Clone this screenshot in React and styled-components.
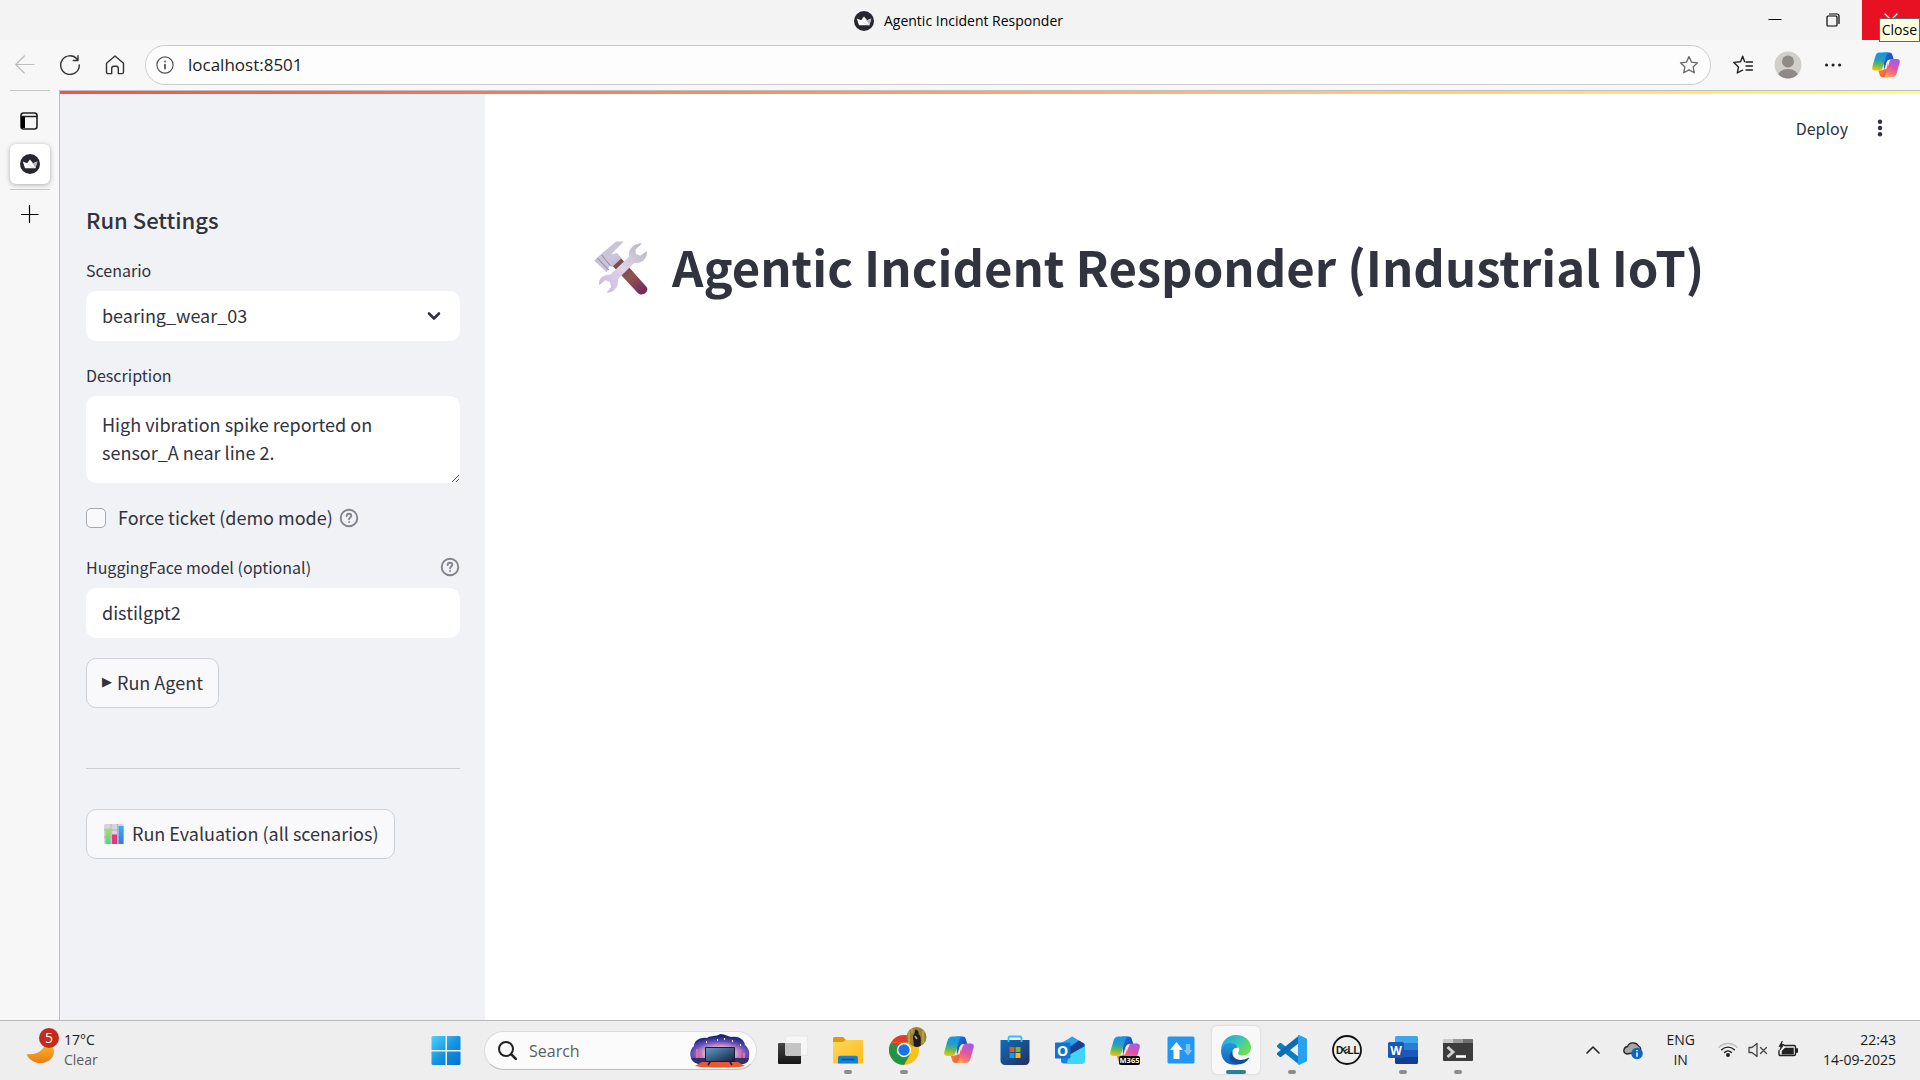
import React from "react";
import styled, { createGlobalStyle } from "styled-components";

const ui = `"Open Sans", "Noto Sans", sans-serif`;
const page = `"Noto Sans CJK SC", "Noto Sans CJK JP", sans-serif`;
const ink = "#31333f";

const Global = createGlobalStyle`
  *, *::before, *::after { box-sizing: border-box; }
  body { margin: 0; background: #fff; }
  button, input, select, textarea { font: inherit; color: inherit; margin: 0; }
  svg { display: block; flex: none; }
`;

const Desktop = styled.div`
  min-height: 100vh;
  display: flex;
  flex-direction: column;
  font-family: ${ui};
  color: #1b1b1b;
`;

/* ---------- window chrome ---------- */

const TitleBar = styled.header`
  height: 40px;
  background: #f3f3f3;
  display: grid;
  grid-template-columns: 1fr auto 1fr;
  align-items: center;
`;
const WindowTitle = styled.div`
  grid-column: 2;
  display: flex;
  align-items: center;
  gap: 10px;
  padding: 1px 3px 0 0;
  font-size: 14px;
  line-height: 20px;
  color: #000;
`;
const WindowButtons = styled.div`
  display: flex;
  justify-content: flex-end;
  align-self: stretch;
  position: relative;
`;
const WindowButton = styled.button`
  width: 58px;
  border: 0;
  padding: 0;
  display: flex;
  align-items: center;
  justify-content: center;
  background: ${(p) => (p.$danger ? "#e81123" : "transparent")};
`;
const Tooltip = styled.div`
  position: absolute;
  right: 0;
  top: 18px;
  padding: 0 2px;
  border: 1px solid #666;
  background: #ffffe1;
  font-size: 14px;
  line-height: 22px;
  color: #000;
  z-index: 2;
`;
const Toolbar = styled.nav`
  height: 50px;
  background: #f7f7f7;
  display: flex;
  align-items: center;
  padding: 0 12px 0 2px;
`;
const ToolButton = styled.button`
  width: 45px;
  height: 40px;
  padding: 0;
  border: 0;
  background: none;
  display: flex;
  align-items: center;
  justify-content: center;
`;
const AssistantButton = styled(ToolButton)`
  margin-left: 8px;
`;
const AddressBar = styled.div`
  flex: 1;
  height: 40px;
  margin: 0 9px 0 8px;
  padding: 0 11px 0 10px;
  border: 1px solid #cdcdcd;
  border-radius: 20px;
  background: #fdfdfd;
  display: flex;
  align-items: center;
  gap: 14px;
`;
const Address = styled.input`
  flex: 1;
  min-width: 0;
  border: 0;
  padding: 0;
  background: none;
  outline: 0;
  font-size: 17px;
  line-height: 24px;
  color: #222;
`;
const PlainButton = styled.button`
  border: 0;
  padding: 0;
  background: none;
`;

const Body = styled.div`
  flex: 1;
  display: flex;
  background: #f7f7f7;
`;
const TabStrip = styled.nav`
  width: 59px;
  padding: 0 9px 0 10px;
  display: flex;
  flex-direction: column;
  align-items: center;
`;
const StripLine = styled.div`
  align-self: stretch;
  height: 1px;
  background: #c8c8c8;
`;
const StripButton = styled.button`
  width: 40px;
  height: ${(p) => p.$height || 40}px;
  padding: 0;
  border: 0;
  border-radius: 6px;
  display: flex;
  align-items: center;
  justify-content: center;
  background: ${(p) => (p.$active ? "#fff" : "transparent")};
  box-shadow: ${(p) => (p.$active ? "0 1px 5px rgba(0,0,0,.3)" : "none")};
  margin-bottom: ${(p) => (p.$active ? 5 : 0)}px;
`;

/* ---------- application page ---------- */

const Page = styled.div`
  flex: 1;
  display: flex;
  flex-direction: column;
  border-left: 1px solid #bcbfc1;
  border-top: 1px solid #bcbfc1;
  background: #fff;
  color: ${ink};
  font-family: ${page};
`;
const Decoration = styled.div`
  height: 3px;
  background: linear-gradient(90deg, #ff4b4b, #fffd80);
`;
const Columns = styled.div`
  flex: 1;
  display: flex;
`;
const Sidebar = styled.aside`
  width: 425px;
  padding: 110px 25px 40px 26px;
  background: #f0f2f6;
  display: flex;
  flex-direction: column;
  align-items: stretch;
  gap: 20px;
  font-size: 18px;
  line-height: 30px;
`;
const SideTitle = styled.h2`
  margin: 0;
  font-size: 22px;
  line-height: 31px;
  font-weight: 500;
`;
const Field = styled.div`
  display: flex;
  flex-direction: column;
  gap: 6px;
`;
const LabelRow = styled.div`
  display: flex;
  align-items: center;
  justify-content: space-between;
`;
const Label = styled.label`
  font-size: 16px;
  line-height: 30px;
`;
const SelectBox = styled.div`
  display: grid;
  grid-template-columns: 1fr 52px;
  align-items: center;

  & > select { grid-area: 1 / 1 / 2 / 3; }
  & > svg { grid-area: 1 / 2; justify-self: center; pointer-events: none; }
`;
const Select = styled.select`
  appearance: none;
  height: 50px;
  padding: 0 16px 2px;
  border: 0;
  border-radius: 10px;
  background: #fff;
`;
const TextInput = styled.input`
  height: 50px;
  padding: 0 16px 2px;
  border: 0;
  border-radius: 10px;
  background: #fff;
`;
const TextArea = styled.textarea`
  height: 87px;
  padding: 14px 16px;
  border: 0;
  border-radius: 10px;
  background: #fff;
  line-height: 28px;
  resize: vertical;
  overflow: hidden;
`;
const Fields = styled.div`
  display: flex;
  flex-direction: column;
  gap: 19px;
`;
const CheckRow = styled.div`
  height: 31px;
  display: flex;
  align-items: center;
  gap: 6px;
`;
const CheckLabel = styled.label`
  display: flex;
  align-items: center;
  gap: 12px;
`;
const CheckText = styled.span`
  padding-bottom: 2px;
`;
const CheckBox = styled.input`
  appearance: none;
  width: 20px;
  height: 20px;
  border: 1px solid #a6a8b0;
  border-radius: 5px;
  background: #f9f9fb;
  &:checked { background: #ff4b4b; }
`;
const AppButton = styled.button`
  align-self: flex-start;
  height: 50px;
  padding: 0 15px 2px;
  border: 1px solid #cfd0d5;
  border-radius: 10px;
  background: #f9f9fb;
  display: flex;
  align-items: center;
  gap: ${(p) => p.$gap}px;
  white-space: nowrap;

  & > svg { margin: 2px 0 0 2px; }
`;
const PlayGlyph = styled.span`
  font-family: "DejaVu Sans", sans-serif;
  font-size: 13px;
`;
const Rule = styled.hr`
  width: 100%;
  height: 1px;
  margin: 40px 0 20px;
  border: 0;
  background: #cbccd2;
`;
const Main = styled.main`
  flex: 1;
  min-width: 0;
`;
const AppHeader = styled.div`
  height: 70px;
  padding: 0 30px 2px 0;
  display: flex;
  align-items: center;
  justify-content: flex-end;
  gap: 22px;
  font-size: 16px;
  line-height: 24px;
`;
const Title = styled.h1`
  margin: 69px 0 0 109px;
  display: flex;
  align-items: center;
  gap: 24px;
  font-size: 49px;
  line-height: 66px;
  font-weight: 700;
  white-space: nowrap;
`;
const TitleText = styled.span`
  padding-bottom: 4px;
`;

/* ---------- taskbar ---------- */

const Taskbar = styled.footer`
  height: 60px;
  border-top: 1px solid #b8b8b8;
  background: #eee;
  padding-top: 5px;
  display: grid;
  grid-template-columns: minmax(0, 1fr) auto minmax(0, 1fr);
  align-items: start;
  font-size: 14px;
  line-height: 20px;
`;
const Weather = styled.div`
  height: 48px;
  padding-left: 26px;
  display: flex;
  align-items: center;
  gap: 5px;

  & > svg { align-self: flex-start; }
`;
const Muted = styled.div`
  color: #5c5c5c;
`;
const Center = styled.div`
  display: flex;
  align-items: flex-start;
  padding-right: 12px;
`;
const Search = styled.label`
  width: 273px;
  height: 39px;
  margin: 5px 8px 0 14px;
  padding: 0 6px 0 13px;
  border: 1px solid #dcdcdc;
  border-bottom-color: #bdbdbd;
  border-radius: 20px;
  background: #fbfbfb;
  display: flex;
  align-items: center;
  gap: 12px;
`;
const SearchInput = styled.input`
  flex: 1;
  min-width: 0;
  border: 0;
  padding: 0;
  background: none;
  outline: 0;
  font-size: 16px;
  line-height: 24px;
  &::placeholder { color: #5e5e5e; opacity: 1; }
`;
const Apps = styled.div`
  width: 721px;
  display: grid;
  grid-template-columns: repeat(13, 1fr);
  justify-items: center;
`;
const TaskButton = styled.button`
  width: 48px;
  height: 48px;
  padding: 9px 0 0;
  border: 0;
  border-radius: 5px;
  background: ${(p) => (p.$active ? "#f8f8f8" : "transparent")};
  box-shadow: ${(p) => (p.$active ? "0 0 2px rgba(0,0,0,.2)" : "none")};
  display: flex;
  flex-direction: column;
  align-items: center;
  gap: 5px;
`;
const Indicator = styled.span`
  width: ${(p) => (p.$active ? 20 : 8)}px;
  height: 4px;
  border-radius: 2px;
  background: ${(p) => (p.$active ? "#258292" : "#8c8c8c")};
`;
const Tray = styled.div`
  height: 48px;
  padding-right: 24px;
  display: flex;
  align-items: center;
  justify-content: flex-end;
  white-space: nowrap;
`;
const Language = styled.div`
  margin: 0 23px;
  text-align: center;
`;
const TrayIcons = styled.div`
  display: flex;
  align-items: center;
  gap: ${(p) => p.$gap}px;
`;
const Clock = styled.time`
  margin-left: 25px;
  text-align: right;
`;

/* ---------- drawings ---------- */

const Line = ({ size = 20, box = 20, w = 1.2, color = "#333", children, ...rest }) => (
  <svg width={size} height={size} viewBox={`0 0 ${box} ${box}`} fill="none" stroke={color}
    strokeWidth={w} strokeLinecap="round" strokeLinejoin="round" aria-hidden="true" {...rest}>
    {children}
  </svg>
);

const Crown = () => (
  <svg width="20" height="20" viewBox="0 0 20 20" aria-hidden="true">
    <circle cx="10" cy="10" r="10" fill="#262730" />
    <path d="M2.8 7.4 7 9.2 10 5.4l3 3.8 4.4-1.8-2 6.8H5z" fill="#fff" />
    <path d="M10 5.4l3 3.8 4.4-1.8-2 6.6z" fill="#b9b9bd" />
    <path d="M7 9.2 15.4 14.2l-4.5-.6z" fill="#dedee0" />
  </svg>
);

const star = "M10 1.6l2.5 5.5 6 .7-4.4 4.1 1.2 5.9L10 14.9l-5.3 2.9 1.2-5.9L1.5 7.8l6-.7z";

const Copilot = ({ size = 30, badge }) => (
  <svg width={size} height={size} viewBox="0 0 30 30" aria-hidden="true">
    <defs>
      <linearGradient id="cpA" x1=".4" y1="0" x2=".3" y2="1">
        <stop offset="0" stopColor="#1494e8" /><stop offset=".4" stopColor="#22a0c4" />
        <stop offset=".7" stopColor="#71b94c" /><stop offset="1" stopColor="#f5c900" />
      </linearGradient>
      <linearGradient id="cpB" x1=".7" y1="0" x2=".3" y2="1">
        <stop offset="0" stopColor="#a15bea" /><stop offset=".45" stopColor="#e055a6" />
        <stop offset=".75" stopColor="#fb6f78" /><stop offset="1" stopColor="#ffac5c" />
      </linearGradient>
      <linearGradient id="cpC" x1="0" y1="0" x2="1" y2="1">
        <stop offset="0" stopColor="#1c74dc" /><stop offset="1" stopColor="#2438b4" />
      </linearGradient>
      <linearGradient id="cpD" x1="0" y1="0" x2="1" y2="1">
        <stop offset="0" stopColor="#ffa13d" /><stop offset="1" stopColor="#ef4a3c" />
      </linearGradient>
    </defs>
    <path d="M12 1.500h6.500c2.300 0 2.900 1.200 3.500 3.200l1.300 4.300h-3.800c-2.300 0-3.300 1.300-4 3.500L13 20z" fill="url(#cpC)" />
    <path d="M18 28h-6.500c-2.300 0-2.900-1.200-3.500-3.200L6.700 20.500h3.800c2.300 0 3.300-1.300 4-3.500L17 9.500z" fill="url(#cpD)" />
    <path d="M8.500 1.500h9.300c-1.500.5-2.200 2-2.700 4l-3.500 11.800c-.7 2.200-1.700 3.700-4.300 3.700H3.200C.5 21-.3 19.300.4 16.800L3.500 5.800C4.200 3.200 5.700 1.500 8.500 1.500z" fill="url(#cpA)" />
    <path d="M21.500 28h-9.300c1.500-.5 2.200-2 2.700-4l3.500-11.800c.7-2.200 1.700-3.700 4.300-3.700h4.100c2.700 0 3.500 1.700 2.800 4.200l-3.100 11c-.7 2.600-2.200 4.300-5 4.300z" fill="url(#cpB)" />
    <path d="M16.200 11h1.700l-2.600 8.500h-1.700z" fill="#f2f2f4" />
    {badge && <rect x="9" y="21" width="21" height="9" rx="2" fill="#000" />}
    {badge && <text x="19.500" y="28.300" fontSize="7.500" fontWeight="700" fill="#fff" textAnchor="middle" fontFamily="Open Sans, sans-serif">{badge}</text>}
  </svg>
);

const Help = () => (
  <Line size={20} box={20} w={1.9} color="#83858e">
    <circle cx="10" cy="10" r="8.300" />
    <path d="M7.700 8c0-1.400 1-2.300 2.300-2.300s2.300.9 2.300 2.100c0 1.600-2.200 1.800-2.200 3.500" />
    <path d="M10.100 13.900v.1" />
  </Line>
);

const Tools = () => (
  <svg width="54" height="54" viewBox="0 0 49 52" preserveAspectRatio="none" aria-hidden="true">
    <defs>
      <linearGradient id="handle" x1="0" y1="0" x2=".8" y2="1">
        <stop offset="0" stopColor="#7c4743" /><stop offset=".6" stopColor="#8d5450" /><stop offset="1" stopColor="#752a60" />
      </linearGradient>
      <linearGradient id="steel" x1="1" y1="0" x2="0" y2="1">
        <stop offset="0" stopColor="#b7b2c2" /><stop offset=".5" stopColor="#ddd5e8" /><stop offset="1" stopColor="#cdb4e6" />
      </linearGradient>
      <linearGradient id="head" x1="0" y1="0" x2="1" y2="1">
        <stop offset="0" stopColor="#c3c0d0" /><stop offset=".6" stopColor="#cdc6da" /><stop offset="1" stopColor="#aaa0c0" />
      </linearGradient>
    </defs>
    <path d="M17 24 24 16 47.500 44c2.400 3-.2 7.500-4.500 7.500-1.500 0-2.700-.8-3.700-2z" fill="url(#handle)" />
    <path d="M43.500 2.500l-5.700 5.800.1 4.300 4 1.600 6-4.300c1 6.300-4.500 12.500-11.500 11.300L21.500 36.800c1.500 6-3.200 13.400-10 12.900l4.100-5.300-1.200-4.800-4.300-1.700-5.300 4.600C3.500 37 8 31.700 14.600 32.500L31.700 15.200C30.600 8.500 36 1.500 43.500 2.500z" fill="url(#steel)" />
    <path d="M0 19l5-5L20 .5h7L15.500 13l5.500-1.500 4 5-8.500 8.500-2.800-1-2 6z" fill="url(#head)" />
    <path d="M3 16.500 13.500 28M7 13.500l8 10.500" stroke="#9a94aa" strokeWidth="1" fill="none" />
  </svg>
);

const BarChart = () => (
  <svg width="20" height="20" viewBox="0 0 20 20" aria-hidden="true">
    <defs>
      <linearGradient id="barG" x1="0" y1="0" x2="0" y2="1"><stop offset="0" stopColor="#a8e05f" /><stop offset="1" stopColor="#4fd48c" /></linearGradient>
      <linearGradient id="barB" x1="0" y1="0" x2="0" y2="1"><stop offset="0" stopColor="#37b0f5" /><stop offset="1" stopColor="#3a78d8" /></linearGradient>
    </defs>
    <rect width="20" height="20" rx="1.500" fill="#d8d1e0" />
    <path d="M0 6h20M0 13h20M7 0v20M13.500 0v20" stroke="#b9b0c4" />
    <rect x="1.500" y="4.500" width="5" height="15.500" fill="url(#barG)" />
    <rect x="8" y="10.500" width="5" height="9.500" fill="#e8337d" />
    <rect x="14.500" y="2" width="5" height="18" fill="url(#barB)" />
  </svg>
);

const Moon = () => (
  <svg width="33" height="38" viewBox="0 0 33 38" aria-hidden="true">
    <defs><linearGradient id="moon" x1="0" y1="0" x2="0" y2="1"><stop offset="0" stopColor="#f3bf2c" /><stop offset="1" stopColor="#ee7a18" /></linearGradient></defs>
    <path d="M.5 28c9 1.500 18-3 19-12.500C27 17 29.500 24 27 30 22 40 5 39.500.5 28z" fill="url(#moon)" />
    <circle cx="23" cy="12" r="10" fill="#c42b1c" />
    <text x="23" y="17" fontSize="14" fill="#fff" textAnchor="middle" fontFamily="Open Sans, sans-serif">5</text>
  </svg>
);

const WindowsLogo = () => (
  <svg width="30" height="30" viewBox="0 0 30 30" aria-hidden="true">
    <defs><linearGradient id="win" gradientUnits="userSpaceOnUse" x1="0" y1="0" x2="30" y2="30"><stop offset="0" stopColor="#4fd6ff" /><stop offset=".55" stopColor="#1490df" /><stop offset="1" stopColor="#0070d2" /></linearGradient></defs>
    <path d="M1.500 1H14.500v14H.5V2zM16 1h12.500l1 1v13H16zM.5 16.500h14v13.500H1.500L.5 29zM16 16.500h13.500V29l-1 1H16z" fill="url(#win)" />
  </svg>
);

const SearchArt = () => (
  <svg width="60" height="34" viewBox="0 0 60 34" aria-hidden="true">
    <defs>
      <radialGradient id="sky" cx=".5" cy=".75" r=".65"><stop offset="0" stopColor="#ffd9a0" /><stop offset=".4" stopColor="#e0a8c8" /><stop offset=".7" stopColor="#6a50b8" /><stop offset="1" stopColor="#1c2480" /></radialGradient>
      <linearGradient id="tv" x1="0" y1="0" x2="1" y2="1"><stop offset="0" stopColor="#5c9ec4" /><stop offset="1" stopColor="#182048" /></linearGradient>
    </defs>
    <path d="M2 26c-3-5-2-11 2-14 0-6 7-9 13-8 4-3 9-1 13-4 6 0 8 3 12 3 6-1 12 2 13 8 5 4 5 10 3 15z" fill="url(#sky)" />
    <path d="M1 24h58c0 3-2 5-5 6H8c-4-1-6-3-7-6z" fill="#32306c" />
    <path d="M12 28h36l7 4c-8 2-42 2-50 0z" fill="#f0562c" />
    <path d="M7 15v9M11 17v7M50 16v8M54 19v5" stroke="#e36ba0" strokeWidth="2" />
    <path d="M16 8h1M27 6h1M34 5h1M42 7h1M50 11h1" stroke="#ffe7b0" strokeWidth="2" />
    <rect x="15" y="13" width="30" height="15" rx="1" fill="#15183a" />
    <rect x="16" y="14" width="28" height="13" fill="url(#tv)" />
    <path d="M20 28l-2 3M40 28l2 3" stroke="#15183a" strokeWidth="1.500" />
  </svg>
);

const Icon30 = ({ children }) => (
  <svg width="30" height="30" viewBox="0 0 30 30" aria-hidden="true">{children}</svg>
);

const TaskView = () => (
  <Icon30>
    <defs><linearGradient id="tvw" x1="0" y1="0" x2="0" y2="1"><stop offset="0" stopColor="#454545" /><stop offset="1" stopColor="#151515" /></linearGradient></defs>
    <rect x="0" y="8" width="23" height="21" rx="1" fill="url(#tvw)" />
    <rect x="7.500" y="1" width="22" height="19.500" rx="1" fill="#f6f6f6" stroke="#e2e2e2" strokeWidth=".6" />
    <rect x="7.500" y="8" width="15.500" height="12.500" fill="#c4c4c4" />
  </Icon30>
);
const Folder = () => (
  <Icon30>
    <defs><linearGradient id="fld" x1="0" y1="0" x2="1" y2="1"><stop offset="0" stopColor="#ffd75c" /><stop offset="1" stopColor="#fcbb1a" /></linearGradient></defs>
    <path d="M0 3.500C0 2.500.7 2 1.500 2H10l3 3v4H0z" fill="#dc9a05" />
    <path d="M0 7h9.500L13 5h17v22.500c0 .6-.4 1-1 1H1c-.6 0-1-.4-1-1z" fill="url(#fld)" />
    <path d="M5 28.500V23c0-1.500.9-2.300 2.300-2.300h15.400c1.400 0 2.300.8 2.300 2.300v5.500z" fill="#1580d4" />
    <path d="M9 24.500h12" stroke="#0a4f93" strokeWidth="1.300" strokeLinecap="round" />
  </Icon30>
);
const ChromeArt = styled.svg`
  margin: -8px -8px 0 0;
`;
const Chrome = () => (
  <ChromeArt width="38" height="38" viewBox="0 0 38 38" aria-hidden="true">
    <circle cx="15" cy="23" r="15" fill="#fbc116" />
    <path d="M2 15.500A15 15 0 0 1 28 15.500H15z" fill="#e33b2e" />
    <path d="M2 15.500A15 15 0 0 0 15 38l6.500-11.300L15 23 8.500 26.700z" fill="#229342" />
    <path d="M2 15.500 8.500 26.700 15 15.500z" fill="#e33b2e" />
    <path d="M2 15.500 8.500 26.700 9 19z" fill="#229342" />
    <circle cx="15" cy="23" r="7.200" fill="#fff" />
    <circle cx="15" cy="23" r="5.700" fill="#1a73e8" />
    <circle cx="27.500" cy="10" r="10" fill="#9a8430" />
    <path d="M20 4v12M34 4v12M23 2v4" stroke="#c4a93e" strokeWidth="1.500" />
    <path d="M26 3c2-1 4 1 3.500 4 3 2 2.500 7 2 12-3 1.500-6 1-7-.5 1-3-1-6-.5-9 .5-2 1-2 1.500-3z" fill="#1e1a20" />
    <path d="M26 9l2 3" stroke="#cfa78e" strokeWidth="1.500" />
  </ChromeArt>
);
const Store = () => (
  <Icon30>
    <defs><linearGradient id="sto" x1="0" y1="0" x2="1" y2="1"><stop offset="0" stopColor="#0f6ebc" /><stop offset="1" stopColor="#262e5c" /></linearGradient></defs>
    <path d="M.5 5h29v20.500c0 2.600-1.800 4.500-4.500 4.500H5C2.300 30 .5 28.100.5 25.500z" fill="url(#sto)" />
    <path d="M8.500 7V3.200c0-1 .5-1.700 1.500-1.700h10c1 0 1.500.7 1.500 1.700V7" fill="none" stroke="#2fc3f5" strokeWidth="1.800" />
    <path d="M9.500 12h5v5h-5z" fill="#f25022" /><path d="M15.500 12h5v5h-5z" fill="#7fba00" />
    <path d="M9.500 18h5v5h-5z" fill="#00a4ef" /><path d="M15.500 18h5v5h-5z" fill="#ffb900" />
  </Icon30>
);
const Outlook = () => (
  <Icon30>
    <path d="M6 10 17 1.500 29.500 9v17c0 1.500-1 2.500-2.500 2.500H9c-1.700 0-3-1-3-2.500z" fill="#1485dc" />
    <path d="M5 8.500 17 2l11 6.500-12 7z" fill="#2aa5ec" />
    <path d="M10 15 24 5.500l5.500 3.500v4L14 22z" fill="#173f94" />
    <path d="M30 11v15c0 1.600-1 2.500-2.500 2.500H12L14 20z" fill="#40d4f8" />
    <rect x="-.5" y="7.500" width="16" height="16" rx="1.500" fill="#1173cf" />
    <text x="7.500" y="20.500" fontSize="14" fontWeight="700" fill="#fff" textAnchor="middle" fontFamily="Open Sans, sans-serif">O</text>
  </Icon30>
);
const Arrows = () => (
  <Icon30>
    <rect x="1.500" y="1.500" width="27" height="27" rx="1.500" fill="#2196f3" />
    <path d="M10.500 7l6.500 8h-3.500v9H7.500v-9H4z" fill="#fff" />
    <path d="M22 20.500l-4.500-5.500h2.300V9h4.400v6h2.300z" fill="#7fc1f7" />
  </Icon30>
);
const Edge = () => (
  <Icon30>
    <defs>
      <linearGradient id="edA" x1="0" y1="0" x2="1" y2=".6"><stop offset="0" stopColor="#2a9fe0" /><stop offset=".5" stopColor="#31c3c4" /><stop offset="1" stopColor="#6ee04e" /></linearGradient>
      <linearGradient id="edB" x1="0" y1="0" x2="0" y2="1"><stop offset="0" stopColor="#2396e0" /><stop offset="1" stopColor="#1064b8" /></linearGradient>
    </defs>
    <path d="M0 14C.8 6 7 0 15 0c9 0 15 6 15 12.500 0 5-4 8-8.500 8-3.500 0-5.200-1.500-4.200-3 1.600-2.200 1-4.500-.8-6.300C12 7.300 3 8.500 0 14z" fill="url(#edA)" />
    <path d="M0 15C1.500 9 7.500 6.800 12.500 8.600c2.600.9 4.200 2.700 4.600 4.500-2-1.200-4.600 0-5.400 2.500-2 6 3 12 9 12.200C14 32 0 30.500 0 15z" fill="url(#edB)" />
    <path d="M11.500 16c-1.500 7 6 12 16 6.700.5-.2.8.2.5.6-4 7-12.500 7-16.500 4.500-4-2.800-4-8.800 0-11.800z" fill="#12509c" />
  </Icon30>
);
const VSCode = () => (
  <Icon30>
    <path d="M0 10.500l2.500-2.200c.6-.5 1.200-.4 1.800 0L22 22v7.500L.4 12.300c-.6-.5-.6-1.200-.4-1.800z" fill="#0a7dc4" />
    <path d="M0 19.500l2.500 2.200c.6.500 1.200.4 1.800 0L22 8V.5L.4 17.700c-.6.500-.6 1.200-.4 1.800z" fill="#0d6cb4" />
    <path d="M22 0l7 3.300c.7.300 1 .8 1 1.500v20.400c0 .7-.3 1.200-1 1.500L22 30c-.8 0-1-.5-1-1.200V1.200C21 .5 21.200 0 22 0z" fill="#26a2ee" />
  </Icon30>
);
const Dell = () => (
  <Icon30>
    <circle cx="15" cy="15" r="14" fill="none" stroke="#111" strokeWidth="1.800" />
    <text x="7.500" y="19" fontSize="10" fontWeight="700" textAnchor="middle" fill="#111" fontFamily="Liberation Sans, sans-serif">D</text>
    <text transform="rotate(-35 13.500 15)" x="13.500" y="18.500" fontSize="9" fontWeight="700" textAnchor="middle" fill="#111" fontFamily="Liberation Sans, sans-serif">E</text>
    <text x="21.500" y="19" fontSize="10" fontWeight="700" textAnchor="middle" fill="#111" fontFamily="Liberation Sans, sans-serif">LL</text>
  </Icon30>
);
const Word = () => (
  <Icon30>
    <path d="M7 2.500C7 1.600 7.600 1 8.500 1h20c.9 0 1.500.6 1.500 1.500V8H7z" fill="#41a5ee" />
    <path d="M7 8h23v7H7z" fill="#2b7cd3" /><path d="M7 15h23v7H7z" fill="#185abd" />
    <path d="M7 22h23v5.500c0 .9-.6 1.500-1.500 1.500h-20c-.9 0-1.500-.6-1.500-1.500z" fill="#103f91" />
    <rect x="0" y="7" width="16" height="16" rx="1.500" fill="#1c56b4" />
    <text x="8" y="19.500" fontSize="12" fontWeight="700" fill="#fff" textAnchor="middle" fontFamily="Open Sans, sans-serif">W</text>
  </Icon30>
);
const Terminal = () => (
  <Icon30>
    <path d="M0 8h30v17c0 .6-.4 1-1 1H1c-.6 0-1-.4-1-1z" fill="#3c3c3c" />
    <path d="M1 4h9v4H0V5c0-.6.4-1 1-1z" fill="#c9c9c9" /><path d="M10 4h10v4H10z" fill="#9a9a9a" /><path d="M20 4h9c.6 0 1 .4 1 1v3H20z" fill="#6f6f6f" />
    <path d="M4.500 12l5.500 5-5.500 5" fill="none" stroke="#d0d0d0" strokeWidth="3" />
    <path d="M13 21.500h10" stroke="#fff" strokeWidth="2.600" />
  </Icon30>
);

const apps = [
  { name: "Task view", Art: TaskView },
  { name: "File Explorer", Art: Folder, open: true },
  { name: "Chrome", Art: Chrome, open: true },
  { name: "Copilot", Art: Copilot },
  { name: "Store", Art: Store },
  { name: "Outlook", Art: Outlook },
  { name: "Microsoft 365", Art: () => <Copilot badge="M365" /> },
  { name: "Transfer", Art: Arrows },
  { name: "Edge", Art: Edge, open: true, active: true },
  { name: "Visual Studio Code", Art: VSCode, open: true },
  { name: "Dell", Art: Dell },
  { name: "Word", Art: Word, open: true },
  { name: "Terminal", Art: Terminal, open: true },
];

export default function App() {
  return (
    <Desktop>
      <Global />
      <TitleBar>
        <WindowTitle><Crown />Agentic Incident Responder</WindowTitle>
        <WindowButtons>
          <WindowButton aria-label="Minimize">
            <Line size={14} box={14} w={1} color="#000" strokeLinecap="butt"><path d="M.5 6.500h13" /></Line>
          </WindowButton>
          <WindowButton aria-label="Restore">
            <Line size={14} box={14} w={1.200} color="#000"><rect x="1" y="3" width="10" height="10" rx="1" /><path d="M3.500 1H11c1.200 0 2 .8 2 2v7.500" /></Line>
          </WindowButton>
          <WindowButton $danger aria-label="Close window">
            <Line size={14} box={14} w={1.200} color="#fff"><path d="M1 1l12 12M13 1 1 13" /></Line>
          </WindowButton>
          <Tooltip role="tooltip">Close</Tooltip>
        </WindowButtons>
      </TitleBar>
      <Toolbar>
        <ToolButton aria-label="Back"><Line color="#bdbdbd"><path d="M19 9.500H.7M9.500.8.7 9.500l8.800 8.700" /></Line></ToolButton>
        <ToolButton aria-label="Refresh"><Line w={1.400}><path d="M19.300 10A9.300 9.300 0 1 1 17 4M18 .8v4.700h-4.700" /></Line></ToolButton>
        <ToolButton aria-label="Home"><Line w={1.400}><path d="M1.500 8.200 10 1l8.500 7.200V17c0 1-.6 1.600-1.500 1.600h-3.700v-5c0-1.400-.8-2.300-2-2.300H8.700c-1.200 0-2 .9-2 2.300v5H3c-.9 0-1.500-.6-1.500-1.600z" /></Line></ToolButton>
        <AddressBar>
          <Line size={18} w={1.300} color="#555"><circle cx="10" cy="10" r="9" /><path d="M10 9.500V14" strokeWidth="2" /><path d="M10 6v.1" strokeWidth="2" /></Line>
          <Address aria-label="Address" defaultValue="localhost:8501" />
          <PlainButton aria-label="Add to favorites"><Line w={1.300} color="#666"><path d={star} /></Line></PlainButton>
        </AddressBar>
        <ToolButton aria-label="Favorites"><Line w={1.400} color="#222"><path d="M11.500 6.500 9.700 1.200 7.500 6.800.8 7.400 5.500 12l-1.200 6 5.200-2.800M13 7h6.500M13 11h6.500M13 15h6.500" /></Line></ToolButton>
        <ToolButton aria-label="Profile">
          <svg width="28" height="28" viewBox="0 0 28 28" aria-hidden="true">
            <defs><clipPath id="avatar"><circle cx="14" cy="14" r="13.500" /></clipPath></defs>
            <g clipPath="url(#avatar)"><rect width="28" height="28" fill="#d1cfcc" /><circle cx="14" cy="10.500" r="6" fill="#8d8a87" /><ellipse cx="14" cy="26" rx="10.500" ry="8" fill="#8d8a87" /></g>
          </svg>
        </ToolButton>
        <ToolButton aria-label="Settings and more"><Line w={3} color="#222"><path d="M3.500 10h.1M10 10h.1M16.500 10h.1" /></Line></ToolButton>
        <AssistantButton aria-label="Copilot"><Copilot size={28} /></AssistantButton>
      </Toolbar>
      <Body>
        <TabStrip aria-label="Tabs">
          <StripLine />
          <StripButton $height={53} aria-label="Tab actions">
            <Line size={18} box={18} w={1.600} color="#222" transform="translate(-1 3)"><rect x="1" y="1" width="16" height="16" rx="2.500" /><path d="M1 4.500h16" /><path d="M3 5v11" strokeWidth="4" strokeLinecap="butt" stroke="#000" /></Line>
          </StripButton>
          <StripButton $active aria-label="Agentic Incident Responder"><Crown /></StripButton>
          <StripLine />
          <StripButton $height={48} aria-label="New tab"><Line size={18} box={18} w={1.200} color="#000"><path d="M8.500 .5v17M0 9.500h17" /></Line></StripButton>
        </TabStrip>
        <Page>
          <Decoration />
          <Columns>
            <Sidebar>
              <SideTitle>Run Settings</SideTitle>
              <Fields>
                <Field>
                  <Label htmlFor="scenario">Scenario</Label>
                  <SelectBox>
                    <Select id="scenario" defaultValue="bearing_wear_03"><option>bearing_wear_03</option></Select>
                    <Line size={14} box={14} w={2.600} color={ink}><path d="M2 4.500l5 5 5-5" /></Line>
                  </SelectBox>
                </Field>
                <Field>
                  <Label htmlFor="description">Description</Label>
                  <TextArea id="description" defaultValue="High vibration spike reported on sensor_A near line 2." />
                </Field>
                <CheckRow>
                  <CheckLabel><CheckBox type="checkbox" /><CheckText>Force ticket (demo mode)</CheckText></CheckLabel>
                  <Help />
                </CheckRow>
                <Field>
                  <LabelRow><Label htmlFor="model">HuggingFace model (optional)</Label><Help /></LabelRow>
                  <TextInput id="model" defaultValue="distilgpt2" />
                </Field>
              </Fields>
              <AppButton $gap={5}><PlayGlyph>▶</PlayGlyph>Run Agent</AppButton>
              <Rule />
              <AppButton $gap={8}><BarChart />Run Evaluation (all scenarios)</AppButton>
            </Sidebar>
            <Main>
              <AppHeader>
                <PlainButton>Deploy</PlainButton>
                <PlainButton aria-label="Main menu">
                  <svg width="20" height="20" viewBox="0 0 20 20" fill={ink} aria-hidden="true"><circle cx="10" cy="3.700" r="2.200" /><circle cx="10" cy="10" r="2.200" /><circle cx="10" cy="16.300" r="2.200" /></svg>
                </PlainButton>
              </AppHeader>
              <Title><Tools /><TitleText>Agentic Incident Responder (Industrial IoT)</TitleText></Title>
            </Main>
          </Columns>
        </Page>
      </Body>
      <Taskbar>
        <Weather><Moon /><div><div>17°C</div><Muted>Clear</Muted></div></Weather>
        <Center>
          <TaskButton aria-label="Start"><WindowsLogo /></TaskButton>
          <Search>
            <Line size={19} box={19} w={2} color="#222"><circle cx="8" cy="8" r="7" /><path d="M13.300 13.300l4.500 4.500" strokeWidth="2.600" /></Line>
            <SearchInput aria-label="Search" placeholder="Search" />
            <SearchArt />
          </Search>
          <Apps>
            {apps.map(({ name, Art, open, active }) => (
              <TaskButton key={name} aria-label={name} $active={active}>
                <Art />
                {open && <Indicator $active={active} />}
              </TaskButton>
            ))}
          </Apps>
        </Center>
        <Tray>
          <TrayIcons $gap={23}>
            <Line size={14} box={14} w={1.600} color="#222"><path d="M1 10l6-6 6 6" /></Line>
            <svg width="20" height="20" viewBox="0 0 20 20" aria-hidden="true">
              <path d="M4 14C-1 13 .5 7 4.500 6.500 6 2 13 1.500 15.500 6c3 1 2.500 5 1 6z" fill="#a8a8a8" stroke="#222" strokeWidth="1.300" />
              <circle cx="14" cy="13.500" r="5.800" fill="#0b67c2" /><path d="M14 12.500v4.200M14 10v1.300" stroke="#fff" strokeWidth="1.500" />
            </svg>
          </TrayIcons>
          <Language>ENG<br />IN</Language>
          <TrayIcons $gap={10}>
            <Line w={1.400} color="#222"><path d="M1 7.200c5-5 13-5 18 0" stroke="#bbb" /><path d="M3.700 9.700c3.500-3.500 9.100-3.500 12.600 0M6.500 12.500c2-2 5-2 7 0" /><circle cx="10" cy="15" r="1.300" fill="#222" /></Line>
            <Line w={1.300} color="#444"><path d="M1 7.500h3L9 3.500v13l-5-4H1zM12.500 7.500l6 6M18.500 7.500l-6 6" /></Line>
            <Line w={1.400} color="#222"><path d="M6.500 5.500H16c1 0 1.500.6 1.500 1.500v7c0 1-.6 1.500-1.500 1.500H2.500C1.600 15.500 1 15 1 14v-3.500" /><path d="M19 9v3" strokeWidth="2" /><path d="M4 14V11l3-3h8.500v6z" fill="#222" strokeWidth=".5" /><path d="M4 1.500 1 6.500h2L2 10l4-5.500H4z" fill="#222" strokeWidth=".8" /></Line>
          </TrayIcons>
          <Clock>22:43<br />14-09-2025</Clock>
        </Tray>
      </Taskbar>
    </Desktop>
  );
}
